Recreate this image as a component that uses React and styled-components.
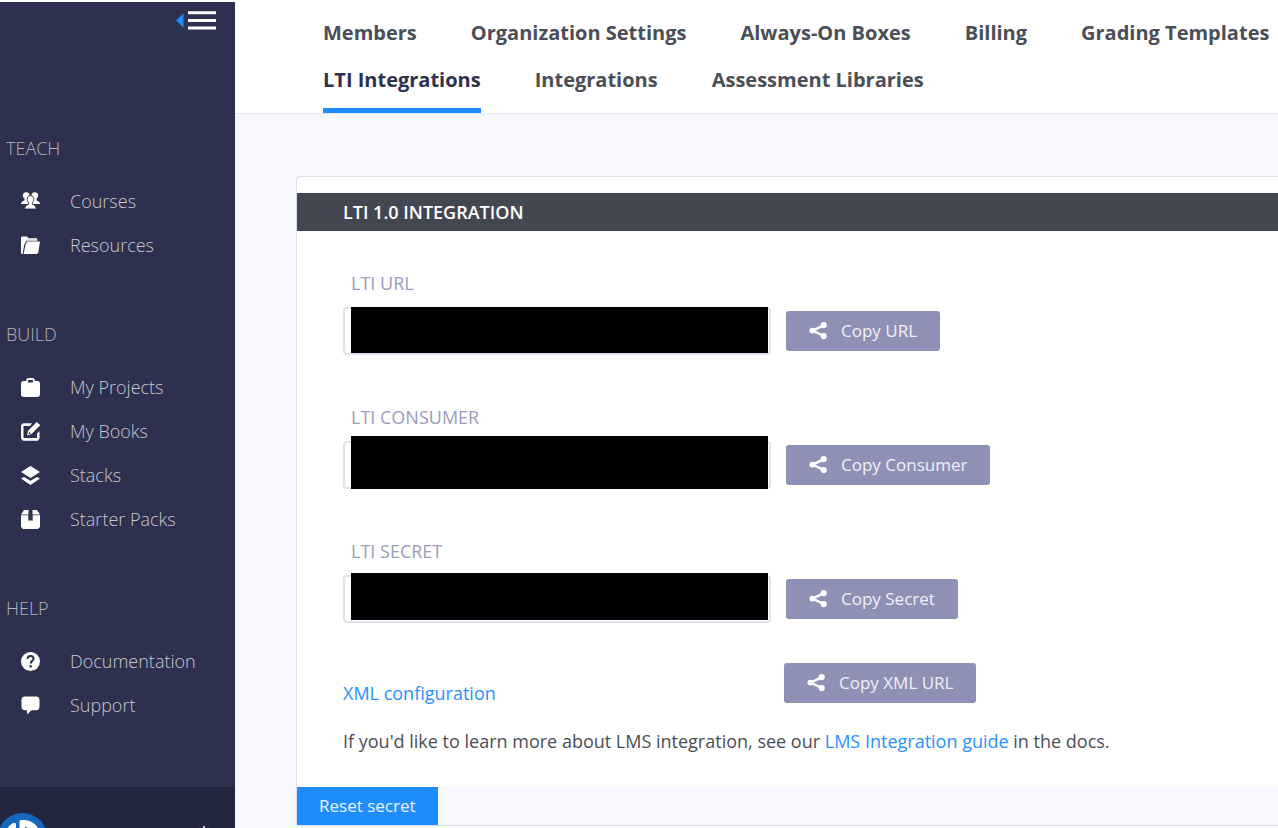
import React, { useId } from "react";
import styled, { createGlobalStyle } from "styled-components";

const color = {
  navy: "#2e304f",
  navyDark: "#23263f",
  blue: "#1f8dff",
  link: "#2a91ff",
  slate: "#434752",
  text: "#4b4e57",
  lilac: "#8f90b5",
  line: "#dcdeeb",
  canvas: "#f6f8fc",
};

const GlobalStyle = createGlobalStyle`
  *, *::before, *::after { box-sizing: border-box; }
  body {
    margin: 0;
    background: #fff;
    color: ${color.text};
    font-family: "Open Sans", "Noto Sans", sans-serif;
    font-size: 18px;
    line-height: 24px;
  }
  a { color: ${color.link}; text-decoration: none; }
  button { font: inherit; cursor: pointer; }
`;

const Shell = styled.div`
  display: flex;
  height: 100vh;
  padding-top: 2px;
  overflow: hidden;
`;

const Sidebar = styled.aside`
  display: flex;
  flex: 0 0 235px;
  flex-direction: column;
  background: ${color.navy};
`;

const SidebarTop = styled.div`
  display: flex;
  flex: 0 0 79px;
  justify-content: flex-end;
  align-items: flex-start;
  padding: 8px 19px 0 0;
`;

const MenuToggle = styled.button`
  display: flex;
  padding: 0;
  border: 0;
  background: none;
`;

const NavSection = styled.nav`
  flex: none;
  padding-top: 45px;
`;

const NavHeading = styled.h2`
  margin: 0 0 9px;
  padding-left: 6px;
  color: #b4b5bb;
  font-size: 18px;
  font-weight: 300;
  line-height: 44px;
`;

const NavItem = styled.a`
  display: flex;
  align-items: center;
  gap: 30px;
  height: 44px;
  padding-left: 21px;
  color: #c6c8ce;
  font-weight: 300;

  svg { color: #fff; flex: none; }
`;

const Account = styled.div`
  display: flex;
  flex: none;
  align-items: flex-start;
  justify-content: space-between;
  height: 100px;
  margin-top: 60px;
  padding: 26px 23px 0 0;
  background: ${color.navyDark};
`;

const PowerButton = styled.button`
  margin-top: 12px;
  padding: 0;
  border: 0;
  background: none;
  color: #c9cad3;
`;

const Main = styled.main`
  flex: 1;
  min-width: 0;
  background: ${color.canvas};
`;

const TabBar = styled.nav`
  display: flex;
  flex-wrap: wrap;
  column-gap: 54px;
  row-gap: 2px;
  padding: 19px 0 0 88px;
  border-bottom: 1px solid #e6e9f2;
  background: #fff;
`;

const Tab = styled.a`
  height: 45px;
  border-bottom: 5px solid ${(p) => (p.$active ? color.blue : "transparent")};
  color: ${(p) => (p.$active ? color.navy : color.text)};
  font-size: 20px;
  font-weight: 700;
`;

const Panel = styled.section`
  margin: 62px 0 0 61px;
  padding-top: 16px;
  border: 1px solid ${color.line};
  border-right: 0;
  border-radius: 4px 0 0 4px;
  background: #fff;
`;

const PanelTitle = styled.h1`
  margin: 0;
  padding-left: 46px;
  background: ${color.slate};
  color: #fff;
  font-size: 18px;
  font-weight: 600;
  line-height: 38px;
`;

const PanelBody = styled.div`
  padding: 40px 46px 34px;
`;

const Fields = styled.div`
  display: grid;
  gap: 50px;
`;

const FieldLabel = styled.label`
  display: block;
  margin-bottom: 12px;
  padding-left: 8px;
  color: #9a9bbd;
`;

const FieldRow = styled.div`
  display: flex;
  align-items: center;
  gap: 15px;
`;

const InputWrap = styled.div`
  position: relative;
  flex: 0 1 428px;
`;

const Input = styled.input`
  display: block;
  width: 100%;
  height: 48px;
  padding: 0 12px;
  border: 2px solid #e2e1ee;
  border-radius: 4px;
  background: #fff;
  font: inherit;
`;

const Redaction = styled.span`
  position: absolute;
  top: ${(p) => p.$top}px;
  right: 3px;
  bottom: ${(p) => p.$bottom}px;
  left: 8px;
  background: #000;
`;

const CopyButton = styled.button`
  display: flex;
  align-items: center;
  gap: 14px;
  height: 40px;
  padding: 0 23px;
  border: 0;
  border-radius: 3px;
  background: ${color.lilac};
  color: #f0f0f6;
  font-size: 17px;
  white-space: nowrap;

  svg { color: #fff; }
`;

const XmlRow = styled.div`
  display: grid;
  grid-template-columns: 441px auto;
  justify-content: start;
  align-items: end;
  margin-top: 40px;
`;

const XmlLink = styled.a`
  line-height: 20px;
`;

const Note = styled.p`
  margin: 26px 0 0;
`;

const PanelFooter = styled.div`
  display: flex;
  background: ${color.canvas};
`;

const ResetButton = styled.button`
  height: 38px;
  padding: 0 22px;
  border: 0;
  background: ${color.blue};
  color: #eaf4ff;
  font-size: 17px;
`;

const Glyph = ({ children }) => (
  <svg width="19" height="19" viewBox="0 0 19 19" fill="currentColor" aria-hidden="true">
    {children}
  </svg>
);

const CoursesIcon = () => (
  <Glyph>
    <circle cx="5.200" cy="3.500" r="3.300" />
    <circle cx="13.800" cy="3.500" r="3.300" />
    <path d="M0 12c0-2 1.500-2.700 3.500-3.500V5.500h4V12zM19 12c0-2-1.500-2.700-3.500-3.500V5.500h-4V12z" />
    <path
      d="M9.500 3.600c2 0 3.300 1.500 3.300 3.700 0 1.500-.6 2.800-1.500 3.500v1.400c2.200.8 3.900 1.600 3.900 4.800H3.800c0-3.200 1.700-4 3.900-4.800v-1.400c-.9-.7-1.500-2-1.500-3.500 0-2.200 1.300-3.700 3.300-3.700z"
      stroke={color.navy}
      strokeWidth=".9"
    />
  </Glyph>
);

const FolderIcon = () => (
  <Glyph>
    <path d="M0 1.500 1 .5h5l1.500 1.700H16V5H5.200L3.300 8.500 1.600 18H.8L0 17z" />
    <path d="M5 3.600h11.500v1.600H4.600z" fill="#c9cad6" />
    <path d="M6.200 5.500H19L17.300 16.500l-1.300 1.500H2.600l1.900-9.400z" />
  </Glyph>
);

const BagIcon = () => (
  <Glyph>
    <path
      fillRule="evenodd"
      d="M5 3C5 1 6 0 8 0h3c2 0 3 1 3 3h2.500C18.200 3 19 4.200 19 6v10c0 2-1 3-3 3H3c-2 0-3-1-3-3V6c0-1.800.8-3 2.500-3zM7 4.600h5V3.300C12 2.400 11.700 2 11 2H8c-.7 0-1 .4-1 1.300z"
    />
  </Glyph>
);

const EditIcon = () => (
  <Glyph>
    <path d="M11 1.200H2l-2 2v13.300L2 18.800h15l1.500-2.300V9L16 11.500V16H2.500V4H9z" />
    <path d="M15.700 0 19.200 3.200 10.500 12 6 13.500 7.300 8.500z" />
    <path d="m8.200 9.800 1.600 1.600-1.800.5-.4-.4z" fill={color.navy} />
  </Glyph>
);

const StackIcon = () => (
  <Glyph>
    <path d="m9.500 0 9.500 6-9.500 6L0 6z" />
    <path d="m0 12.500 3-1.600 6.500 3.800 6.500-3.800 3 1.600-9.500 6.500z" />
  </Glyph>
);

const PackageIcon = () => (
  <Glyph>
    <path d="M3 0h4.500v4.500H0zM11.500 0H16l3 4.500h-7.500z" />
    <path d="M0 5.300h7.300v5.200h4.400V5.300H19V17l-2 2H2l-2-2z" />
  </Glyph>
);

const HelpIcon = () => (
  <Glyph>
    <circle cx="9.500" cy="9.500" r="9.500" />
    <path d="M6.500 6.800c.2-1.900 1.400-2.700 3-2.700 1.800 0 3 .9 3 2.600 0 2.200-2.800 2.200-2.800 4.700" fill="none" stroke={color.navy} strokeWidth="2" />
    <rect x="8.500" y="13.200" width="2.300" height="2.300" fill={color.navy} />
  </Glyph>
);

const ChatIcon = () => (
  <Glyph>
    <path d="M4 .5h11c2.600 0 3.500 1.300 3.500 3.500v6.500c0 2.400-1 3.700-3.500 3.700h-4.500L6.500 18.300 5.800 14.200H4C1.500 14.200.5 12.900.5 10.500V4C.5 1.800 1.500.5 4 .5z" />
  </Glyph>
);

const ShareIcon = () => (
  <svg width="18" height="18" viewBox="0 0 18 18" fill="currentColor" aria-hidden="true">
    <path d="M14.700 3.300 3.500 8.600l11.200 5.300" fill="none" stroke="currentColor" strokeWidth="2.500" />
    <circle cx="3.300" cy="8.600" r="2.900" />
    <circle cx="14.700" cy="3.100" r="3.100" />
    <circle cx="14.700" cy="14.100" r="3.100" />
  </svg>
);

const MenuIcon = () => (
  <svg width="41" height="21" viewBox="0 0 41 21" aria-hidden="true">
    <path d="M1 10.500 8.500 3.500v14z" fill={color.blue} />
    <path d="M13 2.700h28M13 10.400h28M13 18.100h28" stroke="#fff" strokeWidth="3" />
  </svg>
);

const Avatar = () => (
  <svg width="48" height="50" viewBox="0 0 48 50" aria-hidden="true">
    <circle cx="22.500" cy="25" r="25" fill="#1667bd" />
    <path d="M8 15c1-3 4-5 7-5 1 0 1 1 1 2v18l-9-7z" fill="#fff" />
    <path d="M19.500 9c0-2 1-2 3-2 7 0 13 3 16 9l-3 12-16-4z" fill="#fff" />
    <path d="m25 13.500 5 2.500-5 5z" fill="#1667bd" />
  </svg>
);

const PowerIcon = () => (
  <svg width="16" height="18" viewBox="0 0 16 18" fill="none" stroke="currentColor" strokeWidth="2" aria-hidden="true">
    <path d="M8 0v9M4 2.500a7 7 0 1 0 8 0" />
  </svg>
);

const sections = [
  { title: "TEACH", items: [["Courses", CoursesIcon], ["Resources", FolderIcon]] },
  {
    title: "BUILD",
    items: [
      ["My Projects", BagIcon],
      ["My Books", EditIcon],
      ["Stacks", StackIcon],
      ["Starter Packs", PackageIcon],
    ],
  },
  { title: "HELP", items: [["Documentation", HelpIcon], ["Support", ChatIcon]] },
];

const tabs = [
  "Members",
  "Organization Settings",
  "Always-On Boxes",
  "Billing",
  "Grading Templates",
  "LTI Integrations",
  "Integrations",
  "Assessment Libraries",
];

const fields = [
  { label: "LTI URL", action: "Copy URL", top: 0, bottom: 2 },
  { label: "LTI CONSUMER", action: "Copy Consumer", top: -5, bottom: 0 },
  { label: "LTI SECRET", action: "Copy Secret", top: -2, bottom: 3 },
];

function Copy({ children }) {
  return (
    <CopyButton type="button">
      <ShareIcon />
      {children}
    </CopyButton>
  );
}

function CredentialField({ label, action, top, bottom }) {
  const id = useId();
  return (
    <div>
      <FieldLabel htmlFor={id}>{label}</FieldLabel>
      <FieldRow>
        <InputWrap>
          <Input id={id} type="text" readOnly />
          <Redaction $top={top} $bottom={bottom} />
        </InputWrap>
        <Copy>{action}</Copy>
      </FieldRow>
    </div>
  );
}

export default function App() {
  return (
    <>
      <GlobalStyle />
      <Shell>
        <Sidebar>
          <SidebarTop>
            <MenuToggle type="button" aria-label="Collapse menu">
              <MenuIcon />
            </MenuToggle>
          </SidebarTop>
          {sections.map(({ title, items }) => (
            <NavSection key={title} aria-label={title}>
              <NavHeading>{title}</NavHeading>
              {items.map(([label, Icon]) => (
                <NavItem key={label} href="#">
                  <Icon />
                  {label}
                </NavItem>
              ))}
            </NavSection>
          ))}
          <Account>
            <Avatar />
            <PowerButton type="button" aria-label="Sign out">
              <PowerIcon />
            </PowerButton>
          </Account>
        </Sidebar>
        <Main>
          <TabBar aria-label="Organization">
            {tabs.map((tab) => (
              <Tab key={tab} href="#" $active={tab === "LTI Integrations"}>
                {tab}
              </Tab>
            ))}
          </TabBar>
          <Panel>
            <PanelTitle>LTI 1.0 INTEGRATION</PanelTitle>
            <PanelBody>
              <Fields>
                {fields.map((field) => (
                  <CredentialField key={field.label} {...field} />
                ))}
              </Fields>
              <XmlRow>
                <XmlLink href="#">XML configuration</XmlLink>
                <Copy>Copy XML URL</Copy>
              </XmlRow>
              <Note>
                If you'd like to learn more about LMS integration, see our{" "}
                <a href="#">LMS Integration guide</a> in the docs.
              </Note>
            </PanelBody>
            <PanelFooter>
              <ResetButton type="button">Reset secret</ResetButton>
            </PanelFooter>
          </Panel>
        </Main>
      </Shell>
    </>
  );
}
